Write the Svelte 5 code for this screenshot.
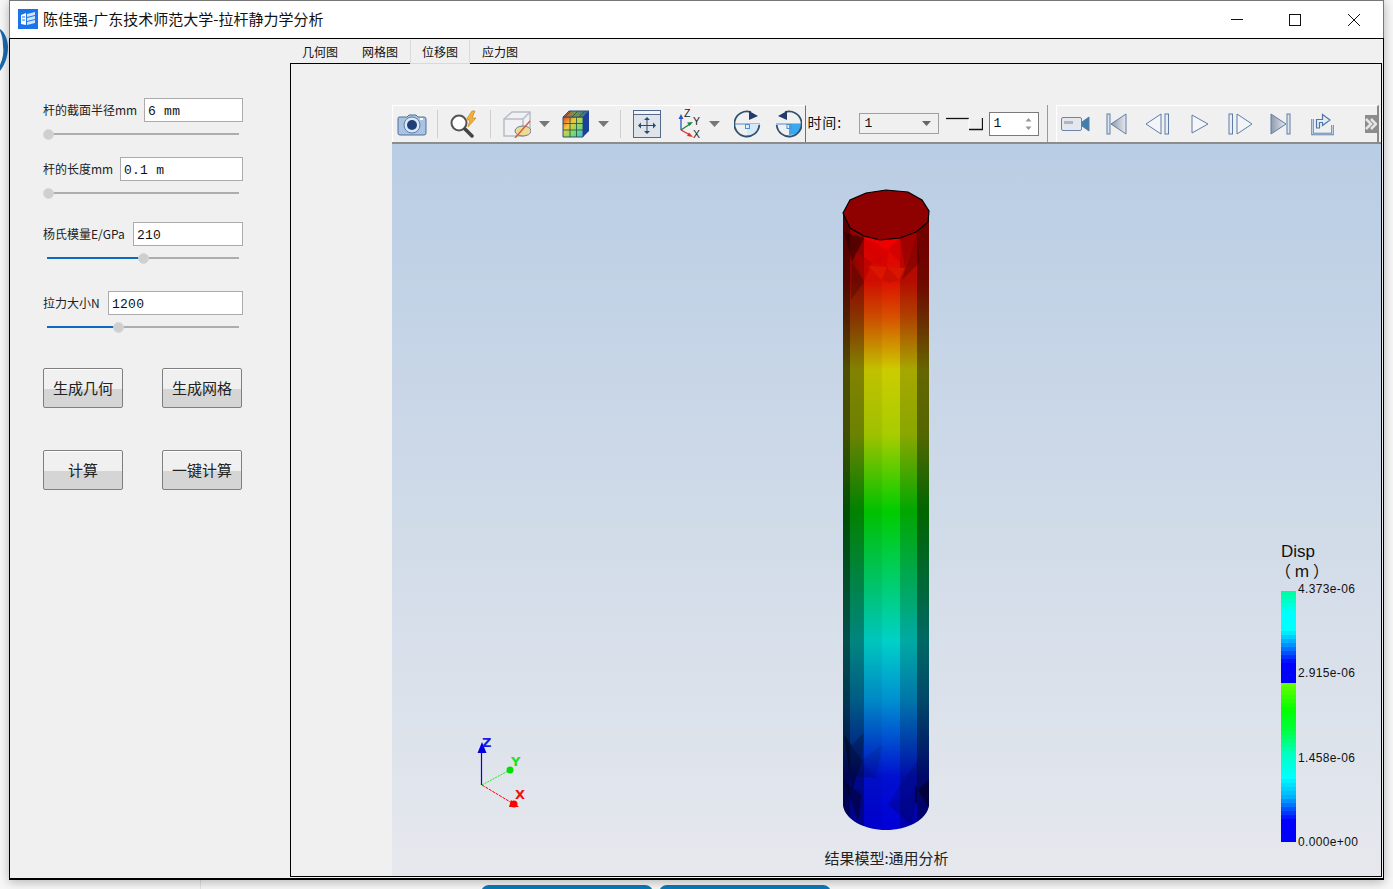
<script>
  const fields = [
    { cls: 'g1', label: '杆的截面半径mm', value: '6 mm', pct: 0 },
    { cls: 'g2', label: '杆的长度mm', value: '0.1 m', pct: 0 },
    { cls: 'g3', label: '杨氏模量E/GPa', value: '210', pct: 50 },
    { cls: 'g4', label: '拉力大小N', value: '1200', pct: 37 }
  ];
  const tabs = ['几何图', '网格图', '位移图', '应力图'];
  const stops = [
    [0, [0, 255, 155]], [22, [0, 255, 255]], [39, [0, 255, 255]], [52, [0, 160, 255]], [72, [0, 0, 255]], [93, [0, 0, 255]],
    [93.01, [102, 255, 0]], [119, [0, 255, 0]], [139, [0, 255, 64]], [162, [0, 255, 192]], [186, [0, 255, 255]], [206, [0, 176, 255]], [229, [0, 0, 255]], [251, [0, 0, 255]]
  ];
  function colorAt(y) {
    for (let i = 1; i < stops.length; i++) {
      if (y <= stops[i][0]) {
        const [a, ca] = stops[i - 1];
        const [b, cb] = stops[i];
        const t = (y - a) / (b - a);
        return `rgb(${ca.map((c, k) => Math.round(c + (cb[k] - c) * t)).join(',')})`;
      }
    }
    return 'rgb(0,0,255)';
  }
  const bands = Array.from({ length: 63 }, (_, i) => ({ y: i * 4, fill: colorAt(i * 4 + 2) }));
  const labels = ['4.373e-06', '2.915e-06', '1.458e-06', '0.000e+00'];
  const shades = [
    { x: 843, w: 7, o: 0.62 }, { x: 850, w: 14, o: 0.36 }, { x: 864, w: 18, o: 0.05 },
    { x: 882, w: 18, o: 0 }, { x: 900, w: 17, o: 0.18 }, { x: 917, w: 12, o: 0.5 }
  ];
  const topFacets = [
    ['864,238 900,238 888,250', 0.9, '#ee0000'],
    ['864,238 888,250 872,262', 0.6, '#d80000'],
    ['888,250 900,238 905,268', 0.5, '#c80000'],
    ['852,250 872,262 864,282', 0.55, '#b00000'],
    ['872,262 888,250 887,267', 0.6, '#d00000'],
    ['868,266 887,267 882,280', 0.85, '#dc1800'],
    ['887,267 905,268 899,280', 0.85, '#d81800'],
    ['882,280 887,267 899,280 890,283', 0.4, '#b01000'],
    ['900,238 917,232 905,268', 0.14, '#000'],
    ['917,232 920,262 902,280', 0.22, '#000'],
    ['844,232 864,238 852,262', 0.4, '#000'],
    ['852,262 864,282 851,300', 0.2, '#000']
  ];
  const bottomFacets = [
    ['844,735 862,760 852,790', 0.4, '#000'], ['852,745 864,732 862,760', 0.22, '#000'],
    ['862,760 876,778 856,776', 0.18, '#000'], ['862,760 882,745 876,778', 0.1, '#000'],
    ['888,805 900,785 918,790', 0.12, '#000'], ['900,785 918,760 918,790', 0.14, '#000'],
    ['843,780 862,795 858,820', 0.35, '#000'], ['888,805 918,790 912,825', 0.18, '#000'],
    ['918,790 929,780 929,808', 0.45, '#000']
  ];
</script>

<div class="desktop">
  <svg class="bgarc" width="9" height="80" viewBox="0 0 9 80"><path d="M0 29 C6 33 8 42 8 47 C8 58 4 66 0 71 V65 C3 58 4 52 3 46 C3 40 2 35 0 31z" fill="#1a6ab0"/></svg>
  <div class="faint"></div>
  <div class="dock"><span></span><span></span></div>

  <div class="window">
    <header class="titlebar">
      <svg class="appicon" width="20" height="20" viewBox="0 0 20 20">
        <rect width="20" height="20" fill="#1a73e8"/>
        <path d="M3 6 8 4v12l-5-1z" fill="#fff"/>
        <path d="M9 5l8-2v3l-8 2zM9 9l8-2v3l-8 2zM9 13l8-2v3l-8 2z" fill="#cfe3fb"/>
        <path d="M4 8h3M4 11h3" stroke="#1a73e8"/>
      </svg>
      <span class="apptitle">陈佳强-广东技术师范大学-拉杆静力学分析</span>
      <div class="winbtns">
        <svg width="58" height="38" viewBox="0 0 58 38"><path d="M22 18.500h12" stroke="#111"/></svg>
        <svg width="58" height="38" viewBox="0 0 58 38"><rect x="22.500" y="13.500" width="11" height="11" fill="none" stroke="#111"/></svg>
        <svg width="58" height="38" viewBox="0 0 58 38"><path d="M23 13l12 12M35 13 23 25" stroke="#111"/></svg>
      </div>
    </header>

    <div class="client">
      <aside class="sidebar">
        {#each fields as f}
          <div class="group {f.cls}">
            <div class="row">
              <label class="lab" for={f.cls}>{f.label}</label>
              <input id={f.cls} class="inp" value={f.value} readonly />
            </div>
            <div class="slider">
              <div class="fill" style="width:{f.pct}%"></div>
              <div class="knob" style="left:{f.pct}%"></div>
            </div>
          </div>
        {/each}
        <div class="btnrow first"><button>生成几何</button><button>生成网格</button></div>
        <div class="btnrow second"><button>计算</button><button>一键计算</button></div>
      </aside>

      <main class="right">
        <nav class="tabs">
          {#each tabs as t, i}
            <div class="tab" class:active={i === 2}>{t}</div>
          {/each}
        </nav>
        <section class="pane">
          <div class="toolbars">
            <div class="tb tb1">
              <!-- camera -->
              <svg class="i" width="30" height="26" viewBox="0 0 30 26">
                <path d="M2 6h8l2-2h7l2 2h6q2 0 2 2v14q0 2-2 2H3q-2 0-2-2V8q0-2 1-2z" fill="#a8c4e2" stroke="#4f6f9a"/>
                <circle cx="15" cy="14" r="8" fill="#dce8f4" stroke="#5d7ea8"/>
                <circle cx="15" cy="14" r="5" fill="#1f3f78"/>
                <rect x="23" y="7" width="3" height="2" fill="#fff"/>
              </svg>
              <i class="sep"></i>
              <!-- search -->
              <svg class="i s-search" width="30" height="28" viewBox="0 0 30 28">
                <circle cx="9" cy="13" r="7.500" fill="#fff" stroke="#555" stroke-width="2"/>
                <path d="M15 19l7 7" stroke="#444" stroke-width="3.500" stroke-linecap="round"/>
                <path d="M22 1 16 10h4l-2 7 8-9h-4l3-7z" fill="#f3b13a" stroke="#c5851c" stroke-width=".7"/>
              </svg>
              <i class="sep"></i>
              <!-- box with clip -->
              <svg class="i s-box" width="28" height="28" viewBox="0 0 28 28">
                <path d="M1 9 9 2h18v17l-7 7H1z" fill="#f1f1f3" stroke="#b6bcc8" stroke-width="1.500"/>
                <path d="M1 9h19v17M20 9l7-7" fill="none" stroke="#b6bcc8" stroke-width="1.500"/>
                <ellipse cx="20" cy="21" rx="8" ry="5" fill="#ebd994" stroke="#6b7c98"/>
                <path d="M12 28 27 11" stroke="#d9562c" stroke-width="1.300"/>
              </svg>
              <svg class="arrow" width="11" height="6" viewBox="0 0 11 6"><path d="M0 0h11L5.500 6z" fill="#777"/></svg>
              <!-- colored cube -->
              <svg class="i c1" width="28" height="28" viewBox="0 0 28 28">
                <defs>
                  <linearGradient id="cube" x1="0" y1="0" x2="1" y2="1">
                    <stop offset="0" stop-color="#e0452a"/><stop offset=".35" stop-color="#f0c83a"/><stop offset=".65" stop-color="#7bdc6a"/><stop offset="1" stop-color="#38b6e8"/>
                  </linearGradient>
                  <linearGradient id="cubetop" x1="0" y1="0" x2="1" y2="0">
                    <stop offset="0" stop-color="#d8503a"/><stop offset=".5" stop-color="#6f9a48"/><stop offset="1" stop-color="#2a5fb0"/>
                  </linearGradient>
                </defs>
                <path d="M1 7h20v20H1z" fill="url(#cube)" stroke="#33506f"/>
                <path d="M1 7 7 1h20l-6 6z" fill="url(#cubetop)" stroke="#33506f"/>
                <path d="M21 7l6-6v20l-6 6z" fill="#1c3f9c"/>
                <path d="M8 7v20M14.500 7v20M1 13.500h20M1 20h20M9 1 3 7M16 1l-6 6M23 1l-6 6" stroke="#2d5a4a" stroke-width=".9"/>
              </svg>
              <svg class="arrow" width="11" height="6" viewBox="0 0 11 6"><path d="M0 0h11L5.500 6z" fill="#777"/></svg>
              <i class="sep s3"></i>
              <!-- fit -->
              <svg class="i c2" width="28" height="28" viewBox="0 0 28 28">
                <rect x=".5" y=".5" width="27" height="27" fill="#dfe3ea" stroke="#53688c"/>
                <rect x="1" y="1" width="26" height="3" fill="#f3f4f7"/>
                <path d="M1 4.500h26" stroke="#53688c"/>
                <path d="M14 9v13M7.500 15.500h13" stroke="#2c4a70"/>
                <path d="M14 7l-3 3h6zM14 24l-3-3h6zM5 15.500l3-3v6zM23 15.500l-3-3v6z" fill="#2c4a70"/>
              </svg>
              <!-- axes -->
              <svg class="i c3" width="27" height="34" viewBox="0 -2 27 34">
                <path d="M4 21V9" stroke="#2a55c5" stroke-width="1.300"/><path d="M4 5 1.500 10h5z" fill="#2a55c5"/>
                <path d="M4 21 13 15" stroke="#1a8a3e" stroke-width="1.300"/><path d="M16 13l-6 .5 2.500 3.500z" fill="#1a8a3e"/>
                <path d="M4 21l9 5" stroke="#e32828" stroke-width="1.300"/><path d="M16 28l-6-1 2-3.500z" fill="#e32828"/>
                <text x="7" y="8" class="ax">Z</text><text x="16" y="16" class="ax">Y</text><text x="16" y="29" class="ax">X</text>
              </svg>
              <svg class="arrow a3" width="11" height="6" viewBox="0 0 11 6"><path d="M0 0h11L5.500 6z" fill="#777"/></svg>
              <!-- rotate 1 -->
              <svg class="i c4" width="27" height="28" viewBox="0 0 27 28">
                <path d="M1 14h25" stroke="#4a90d0"/>
                <path d="M13 14h12q0 11-12 11z" fill="#d6e9f8"/>
                <rect x="11.500" y="14.500" width="4" height="4" fill="none" stroke="#4a90d0"/>
                <path d="M25.300 15A12.500 12.500 0 1 1 17 2.200" fill="none" stroke="#2f5170" stroke-width="1.800"/>
                <path d="M24 6l-9-5 0 9z" fill="#1f3a6b"/>
              </svg>
              <!-- rotate 2 -->
              <svg class="i c5" width="27" height="28" viewBox="0 0 27 28">
                <path d="M1 14h25" stroke="#4a90d0"/>
                <path d="M14 14h12q0 11-12 11z" fill="#3aa8ee"/>
                <rect x="12" y="14.500" width="4" height="4" fill="none" stroke="#4a90d0"/>
                <path d="M1.700 15A12.500 12.500 0 1 0 10 2.200" fill="none" stroke="#2f5170" stroke-width="1.800"/>
                <path d="M3 6l9-5 0 9z" fill="#1f3a6b"/>
              </svg>
            </div>

            <div class="tb tb2">
              <span class="time">时间:</span>
              <div class="combo"><span>1</span><svg width="9" height="5" viewBox="0 0 9 5"><path d="M0 0h9L4.500 5z" fill="#666"/></svg></div>
              <svg class="step" width="37" height="14" viewBox="0 0 37 14">
                <path d="M0 1.500h23" fill="none" stroke="#111" stroke-width="1.300"/>
                <path d="M23 1.500v11" stroke="#fff"/>
                <path d="M23 12.500h13.500V1" fill="none" stroke="#111" stroke-width="1.300"/>
              </svg>
              <div class="spin"><span>1</span><svg width="7" height="14" viewBox="0 0 7 14"><path d="M3.500 1 6.500 4.500h-6zM3.500 13l3-3.500h-6z" fill="#999"/></svg></div>
            </div>

            <div class="tb tb3">
              <svg class="p" width="29" height="18" viewBox="0 0 29 18">
                <rect x=".5" y="2.500" width="20" height="13" rx="1.500" fill="#e4e7ed" stroke="#6d83a6"/>
                <rect x="3" y="6" width="9" height="3" fill="#aeb6c4"/>
                <path d="M21 7l7-5v14l-7-5z" fill="#3e7fb2" stroke="#5a7ca2"/>
              </svg>
              <svg class="p p1" width="21" height="22" viewBox="0 0 21 22">
                <defs>
                  <linearGradient id="pg" x1="0" y1="0" x2="1" y2="0"><stop offset="0" stop-color="#8e9aac"/><stop offset="1" stop-color="#e6e9ee"/></linearGradient>
                </defs>
                <rect x="1" y="1" width="3" height="20" fill="#dfe5ed" stroke="#5f7ca5"/>
                <path d="M20 1v20L5 11z" fill="url(#pg)" stroke="#5f7ca5"/>
              </svg>
              <svg class="p p2" width="25" height="22" viewBox="0 0 25 22">
                <path d="M16 1v20L1 11z" fill="#f3f5f8" stroke="#5f7ca5"/>
                <rect x="20" y="1" width="3.500" height="20" fill="#e8edf3" stroke="#5f7ca5"/>
              </svg>
              <svg class="p p3" width="18" height="22" viewBox="0 0 18 22"><path d="M1 2v18l16-9z" fill="#f3f5f8" stroke="#5f7ca5"/></svg>
              <svg class="p p4" width="25" height="22" viewBox="0 0 25 22">
                <rect x="1" y="1" width="3.500" height="20" fill="#e8edf3" stroke="#5f7ca5"/>
                <path d="M9 1v20l15-10z" fill="#f3f5f8" stroke="#5f7ca5"/>
              </svg>
              <svg class="p p5" width="21" height="22" viewBox="0 0 21 22">
                <path d="M1 1v20l15-10z" fill="url(#pg)" stroke="#5f7ca5"/>
                <rect x="17" y="1" width="3" height="20" fill="#dfe5ed" stroke="#5f7ca5"/>
              </svg>
              <svg class="p p6" width="25" height="24" viewBox="0 0 25 24">
                <path d="M2.500 7v15h20v-9" fill="none" stroke="#4f78a8" stroke-width="2.400"/>
                <path d="M2.500 7v15h20v-9" fill="none" stroke="#dbe7f3" stroke-width=".8"/>
                <path d="M6.500 16V7.500h6V2.500l7.500 5.500-7.500 5.500v-3H9.500v5.500z" fill="#e3edf6" stroke="#4f78a8" stroke-width="1.200"/>
              </svg>
              <svg class="p p7" width="12" height="18" viewBox="0 0 12 18">
                <rect width="12" height="18" fill="#8c8c8c"/>
                <path d="M1 4l5 5-5 5M6 4l5 5-5 5" fill="none" stroke="#e6e6e6" stroke-width="2.500"/>
              </svg>
            </div>
          </div>

          <div class="viewport">
            <svg class="scene" width="989" height="733" viewBox="392 144 989 733">
              <defs>
                <linearGradient id="rod" gradientUnits="userSpaceOnUse" x1="0" y1="240" x2="0" y2="830">
                  <stop offset="0" stop-color="#e40000"/>
                  <stop offset=".07" stop-color="#dc1000"/>
                  <stop offset=".13" stop-color="#d65000"/>
                  <stop offset=".22" stop-color="#cccc00"/>
                  <stop offset=".33" stop-color="#a8cc00"/>
                  <stop offset=".46" stop-color="#00cc00"/>
                  <stop offset=".68" stop-color="#00d0c8"/>
                  <stop offset=".78" stop-color="#0090d0"/>
                  <stop offset=".91" stop-color="#0010d0"/>
                  <stop offset="1" stop-color="#0000d8"/>
                </linearGradient>
                <clipPath id="body"><path d="M843 215V805C845 820 865 830 886 830S927 820 929 805V215z"/></clipPath>
              </defs>
              <g clip-path="url(#body)">
                <rect x="843" y="190" width="86" height="640" fill="url(#rod)"/>
                {#each shades as s}
                  <rect x={s.x} y="190" width={s.w} height="640" fill="#000" opacity={s.o}/>
                {/each}
                {#each topFacets as f}<polygon points={f[0]} fill={f[2]} opacity={f[1]}/>{/each}
                {#each bottomFacets as f}<polygon points={f[0]} fill={f[2]} opacity={f[1]}/>{/each}
              </g>
              <path d="M916 786v17" stroke="#000" stroke-width="1"/>
              <polygon points="843,213 850,200 866,193 886,190 908,192 922,200 929,211 928,222 916,232 900,238 880,240 864,236 850,228" fill="#8f0000" stroke="#000" stroke-width="1.200"/>

              <!-- triad -->
              <path d="M481.500 785V752" stroke="#0000e0" stroke-width="1.200"/>
              <path d="M482 742l-4.500 11h9z" fill="#0000e0"/>
              <path d="M482 785 508 771" stroke="#00ff00" stroke-width="1" stroke-dasharray="2 1"/>
              <circle cx="510" cy="770" r="3.500" fill="#00e000"/>
              <path d="M482 785 512 803" stroke="#ff0000" stroke-width="1" stroke-dasharray="3 1"/>
              <path d="M511 800l8 7h-10z" fill="#f00"/><circle cx="514" cy="804" r="3.500" fill="#f00"/>
              <text x="482" y="747" class="t z">Z</text>
              <text x="511" y="766" class="t y">Y</text>
              <text x="515" y="799" class="t x">X</text>
            </svg>

            <div class="legend">
              <div class="ltitle">Disp</div>
              <div class="lunit">（ m ）</div>
              <div class="lbody">
                <svg width="15" height="251" viewBox="0 0 15 251">
                  {#each bands as b}<rect x="0" y={b.y} width="15" height="4.200" fill={b.fill}/>{/each}
                  <rect y="93" width="15" height="1" fill="#66ff00"/>
                </svg>
                <div class="lvals">{#each labels as l}<span>{l}</span>{/each}</div>
              </div>
            </div>
            <div class="caption">结果模型:通用分析</div>
          </div>
        </section>
      </main>
    </div>
  </div>
</div>

<style>
  :global(body) { margin: 0; }
  * { box-sizing: border-box; }
  .desktop {
    position: relative; width: 1393px; height: 889px; overflow: hidden;
    background: #f7f7f7;
    font-family: "Noto Sans CJK SC", "Liberation Sans", sans-serif;
    color: #111;
  }
  .bgarc { position: absolute; left: 0; top: 0; }
  .faint { position: absolute; left: 200px; top: 880px; width: 1px; height: 9px; background: #e2e2e2; }
  .dock { position: absolute; left: 481px; top: 885px; display: flex; gap: 6px; }
  .dock span { width: 172px; height: 10px; background: #0a7ab8; border-radius: 8px 8px 0 0; }
  .window {
    position: absolute; left: 9px; top: 0; width: 1375px; height: 880px;
    background: #fff; border: 1px solid #777; border-bottom: 0;
    box-shadow: 0 2px 10px rgba(0, 0, 0, .28);
    display: flex; flex-direction: column;
  }
  .titlebar { height: 37px; display: flex; align-items: center; padding-left: 8px; flex: none; }
  .appicon { margin-right: 5px; margin-top: -1px; }
  .apptitle { font-size: 15px; line-height: 20px; margin-top: -1px; color: #111; }
  .winbtns { margin-left: auto; display: flex; }
  .client {
    flex: 1; display: flex; background: #f0f0f0;
    border: 1px solid #000; border-bottom-width: 2px;
    margin: 0 -1px; min-height: 0;
  }
  .sidebar { width: 280px; flex: none; padding-left: 33px; }
  .group { width: 200px; }
  .g1 { margin-top: 59px; }
  .g2 { margin-top: 22px; }
  .g3 { margin-top: 28px; }
  .g4 { margin-top: 32px; }
  .row { display: flex; align-items: center; justify-content: space-between; height: 24px; }
  .lab { font-size: 12px; color: #222; white-space: nowrap; padding-bottom: 2px; }
  .inp {
    height: 24px; border: 1px solid #ababab; background: #fff; padding: 2px 0 0 3px;
    font: 13px/1 "Liberation Mono", monospace; letter-spacing: .25px; color: #111; outline: none; min-width: 0;
  }
  .g1 .inp { width: 99px; }
  .g2 .inp { width: 123px; }
  .g3 .inp { width: 110px; }
  .g4 .inp { width: 135px; }
  .slider {
    position: relative; width: 192px; height: 2px; margin: 11px 0 0 4px; background: #adadad;
  }
  .fill { height: 2px; background: #0a6cc0; }
  .knob {
    position: absolute; top: -4.500px; width: 11px; height: 11px; border-radius: 50%;
    background: #cfcfcf; border: 1px solid #d8d8d8; margin-left: -4px;
  }
  .g3 .knob { margin-left: -5px; }
  .g4 .knob { margin-left: -5px; }
  .btnrow { display: flex; gap: 39px; }
  .btnrow.first { margin-top: 40px; }
  .btnrow.second { margin-top: 42px; }
  button {
    width: 80px; height: 40px; border: 1px solid #7f7f7f; border-radius: 2px; padding: 0 0 2px;
    background: linear-gradient(#f0f0f0 0, #f0f0f0 52%, #d5d5d5 52%, #d5d5d5 100%);
    font: 15px "Noto Sans CJK SC", sans-serif; color: #222; box-shadow: inset 0 1px 0 #fff;
  }
  .right { flex: 1; display: flex; flex-direction: column; min-width: 0; }
  .tabs { display: flex; height: 24px; flex: none; padding-top: 1px; position: relative; z-index: 1; }
  .tab { width: 60px; height: 23px; text-align: center; font-size: 12px; line-height: 23px; color: #111; }
  .tab.active {
    height: 24px; background: #f0f0f0; border: 1px solid #d9d9d9; border-top: 0; line-height: 23px;
  }
  .pane {
    flex: 1; border: 1px solid #000; margin: 0 1px 1px 0;
    display: flex; flex-direction: column; align-items: flex-end; min-height: 0;
    padding-top: 41px; background: #f0f0f0;
  }
  .toolbars { width: 989px; height: 39px; display: flex; flex: none; border-bottom: 2px solid #8c8c8c; }
  .tb { display: flex; align-items: center; height: 37px; }
  .tb1 { width: 415px; border-top: 1px solid #fff; border-left: 1px solid #fff; border-right: 1px solid #6e6e6e; padding-left: 4px; }
  .tb2 { width: 242px; border-right: 1px solid #9a9a9a; padding-left: 1px; }
  .tb3 { flex: 1; margin: 0 2px 0 8px; border-top: 1px solid #fff; border-left: 1px solid #fff; border-right: 2px solid #8a8a8a; padding-left: 4px; }
  .i { flex: none; }
  .sep { flex: none; width: 1px; height: 28px; background: #cfcfcf; margin-left: 10px; }
  .s3 { margin-left: 11px; }
  .s-search, .s-box { margin-left: 12px; }
  .arrow { flex: none; margin-left: 8px; }
  .c1 { margin-left: 12px; }
  .c2 { margin-left: 12px; }
  .c3 { margin-left: 16px; }
  .arrow.a3 { margin-left: 5px; }
  .c4 { margin-left: 14px; }
  .c5 { margin-left: 14px; }
  .ax { font: 10.500px "Liberation Sans", sans-serif; fill: #222; }
  .time { font-size: 14px; letter-spacing: 1px; width: 52px; white-space: nowrap; padding-bottom: 4px; line-height: 20px; }
  .combo {
    width: 80px; height: 21px; border: 1px solid #a0a0a0; display: flex; align-items: center;
    justify-content: space-between; padding: 0 7px 0 4px; font: 13px "Liberation Mono", monospace;
  }
  .step { margin-left: 7px; flex: none; }
  .spin {
    width: 50px; height: 24px; margin-left: 6px; border: 1px solid #7a7a7a; background: #fff; display: flex; align-items: center;
    justify-content: space-between; padding: 0 6px 0 3px; font: 13px "Liberation Mono", monospace;
  }
  .p { flex: none; }
  .p1 { margin-left: 16px; } .p2 { margin-left: 18px; } .p3 { margin-left: 21px; }
  .p4 { margin-left: 19px; } .p5 { margin-left: 17px; } .p6 { margin-left: 19px; } .p7 { margin-left: 30px; }
  .viewport {
    position: relative; width: 989px; flex: 1; min-height: 0;
    background: linear-gradient(#b9cde4, #e6e8ed);
  }
  .scene { position: absolute; left: 0; top: 0; }
  .t { font: bold 13px "DejaVu Sans", sans-serif; }
  .z { fill: #1a1ae6; } .y { fill: #22e022; } .x { fill: #f01010; }
  .legend { position: absolute; left: 889px; top: 399px; width: 90px; font-family: "Liberation Sans", sans-serif; }
  .ltitle { font-size: 17px; line-height: 18px; color: #111; }
  .lunit { font: 16px/18px "Noto Sans CJK SC", sans-serif; margin-left: -6px; color: #111; white-space: nowrap; }
  .lbody { display: flex; height: 251px; margin-top: 12px; }
  .lbody svg { flex: none; }
  .lvals {
    display: flex; flex-direction: column; justify-content: space-between; margin-left: 2px;
    font-size: 12px; line-height: 14px; letter-spacing: .35px; color: #111;
    height: 267px; margin-top: -9px;
  }
  .caption {
    position: absolute; left: 0; right: 0; bottom: 8px; text-align: center; font-size: 15px; line-height: 20px; color: #222;
  }
</style>
